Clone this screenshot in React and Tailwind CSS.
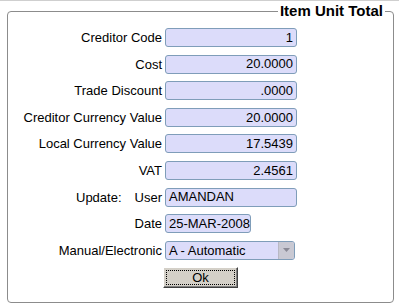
import React from 'react';

const fields = [
  { label: 'Creditor Code', value: '1' },
  { label: 'Cost', value: '20.0000' },
  { label: 'Trade Discount', value: '.0000' },
  { label: 'Creditor Currency Value', value: '20.0000' },
  { label: 'Local Currency Value', value: '17.5439' },
  { label: 'VAT', value: '2.4561' },
];

const inputCls =
  'h-[19px] border border-[#7f9db9] rounded-[3px] bg-[#dcdcfa] px-[3px] flex items-center whitespace-nowrap overflow-hidden text-[13px] text-black';

const App = () => {
  return (
    <div className="w-[399px] h-[308px] bg-white font-['Liberation_Sans',Arial,sans-serif] text-[13px] text-black overflow-hidden">
      {/* window top line */}
      <div className="h-[1px] bg-[#cfcfcf]" />

      <fieldset className="ml-[7px] mt-[2px] w-[387px] h-[300px] border border-[#8c8c8c] rounded-[4px] p-0 m-0">
        <legend className="ml-auto mr-[8px] px-[2px] text-[15px] leading-[16px] font-bold">
          Item Unit Total
        </legend>

        <div className="grid grid-cols-[154px_1fr] gap-x-[3px] gap-y-[7.6px] pt-[9px] items-center">
          {fields.map((f) => (
            <React.Fragment key={f.label}>
              <div className="text-right leading-[19px]">{f.label}</div>
              <div className={`${inputCls} w-[132px] justify-end`}>{f.value}</div>
            </React.Fragment>
          ))}

          {/* Update user */}
          <div className="flex justify-end gap-[13px] leading-[19px]">
            <span>Update:</span>
            <span>User</span>
          </div>
          <div className={`${inputCls} w-[132px]`}>AMANDAN</div>

          {/* Date */}
          <div className="text-right leading-[19px]">Date</div>
          <div className={`${inputCls} w-[86px] px-[2px]`}>25-MAR-2008</div>

          {/* Manual/Electronic */}
          <div className="text-right leading-[19px]">Manual/Electronic</div>
          <div className="h-[19px] w-[130px] border border-[#7f9db9] rounded-[3px] bg-[#dcdcfa] flex items-stretch overflow-hidden">
            <span className="flex-1 px-[3px] leading-[17px]">A - Automatic</span>
            <span className="w-[16px] bg-[#c9c9d3] border-l border-[#b8b8c4] flex items-center justify-center">
              <svg width="7" height="4" viewBox="0 0 7 4">
                <path d="M0 0h7L3.5 4z" fill="#8a8a96" />
              </svg>
            </span>
          </div>

          {/* Ok button */}
          <div />
          <div className="-ml-[2px]">
            <button className="w-[75px] h-[21px] bg-[#d4d0c8] border border-t-white border-l-white border-r-[#404040] border-b-[#404040] shadow-[inset_-1px_-1px_0_#808080] p-[2px]">
              <span className="block h-full border border-dotted border-black leading-[13px] text-[13px]">
                Ok
              </span>
            </button>
          </div>
        </div>
      </fieldset>
    </div>
  );
};

export default App;
